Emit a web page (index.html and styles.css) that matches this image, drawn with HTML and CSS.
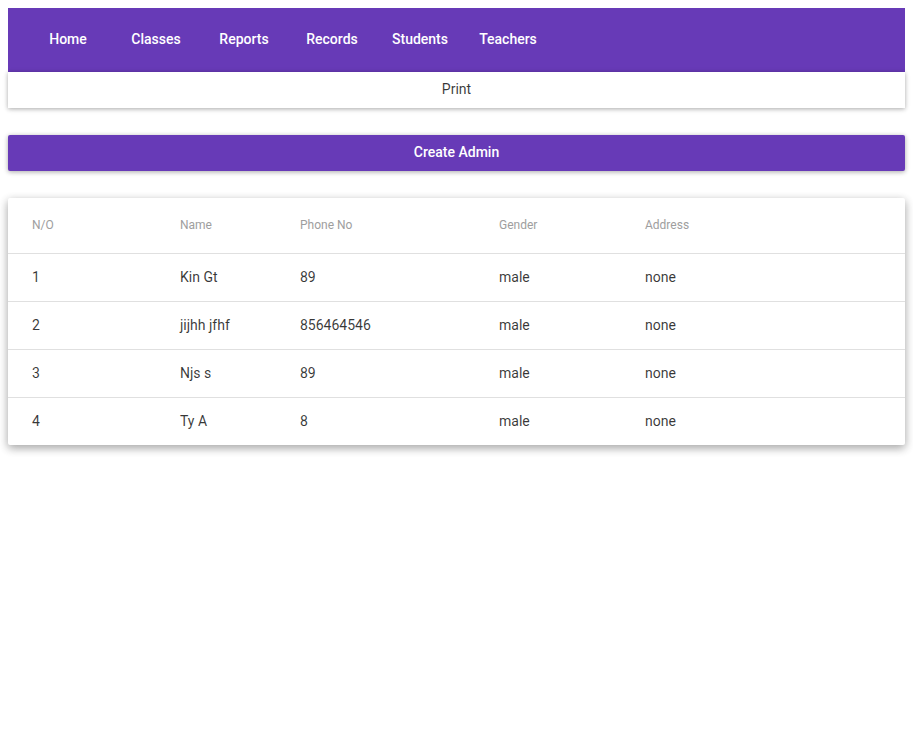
FILE: index.html
```html
<!DOCTYPE html>
<html>
<head>
<meta charset="utf-8">
<link rel="stylesheet" href="styles.css">
</head>
<body>
<header class="appbar">
  <nav class="tabs">
    <a class="tab">Home</a>
    <a class="tab">Classes</a>
    <a class="tab">Reports</a>
    <a class="tab">Records</a>
    <a class="tab">Students</a>
    <a class="tab">Teachers</a>
  </nav>
</header>
<div class="printbar">Print</div>
<button class="create">Create Admin</button>
<div class="card">
  <table class="table">
    <colgroup>
      <col class="c1"><col class="c2"><col class="c3"><col class="c4"><col class="c5">
    </colgroup>
    <thead>
      <tr><th>N/O</th><th>Name</th><th>Phone No</th><th>Gender</th><th>Address</th></tr>
    </thead>
    <tbody>
      <tr><td>1</td><td>Kin Gt</td><td>89</td><td>male</td><td>none</td></tr>
      <tr><td>2</td><td>jijhh jfhf</td><td>856464546</td><td>male</td><td>none</td></tr>
      <tr><td>3</td><td>Njs s</td><td>89</td><td>male</td><td>none</td></tr>
      <tr><td>4</td><td>Ty A</td><td>8</td><td>male</td><td>none</td></tr>
    </tbody>
  </table>
</div>
</body>
</html>
```
FILE: styles.css
```css
html {
  height: 100%;
  background: #fff;
}
body {
  margin: 0;
  padding: 8px;
  min-height: 100%;
  box-sizing: border-box;
  font-family: Roboto, "Liberation Sans", sans-serif;
  background: #fff;
}
.appbar {
  background: #673ab7;
  height: 64px;
  box-sizing: border-box;
  padding: 0 0 2px 16px;
  display: flex;
  align-items: center;
}
.tabs {
  display: flex;
}
.tab {
  width: 88px;
  text-align: center;
  color: #fff;
  font-size: 14px;
  font-weight: 500;
}
.printbar {
  height: 36px;
  line-height: 34px;
  text-align: center;
  font-size: 14px;
  color: rgba(0, 0, 0, 0.78);
  background: #fff;
  box-shadow: 0 1px 6px rgba(0, 0, 0, 0.12), 0 1px 4px rgba(0, 0, 0, 0.24);
}
.create {
  display: block;
  width: 100%;
  margin-top: 27px;
  height: 36px;
  padding: 0 0 2px;
  border: none;
  border-radius: 2px;
  background: #673ab7;
  color: #fff;
  font-family: inherit;
  font-size: 14px;
  font-weight: 500;
  box-shadow: 0 1px 6px rgba(0, 0, 0, 0.12), 0 1px 4px rgba(0, 0, 0, 0.24);
}
.card {
  margin-top: 27px;
  background: #fff;
  border-radius: 2px;
  box-shadow: 0 3px 10px rgba(0, 0, 0, 0.16), 0 3px 10px rgba(0, 0, 0, 0.23);
}
.table {
  width: 100%;
  border-collapse: collapse;
  table-layout: fixed;
}
.c1 { width: 148px; }
.c2 { width: 120px; }
.c3 { width: 199px; }
.c4 { width: 146px; }
.table th {
  height: 53px;
  padding: 0 24px 2px;
  text-align: left;
  font-size: 12px;
  font-weight: 400;
  color: #9e9e9e;
  border-bottom: 1px solid #e0e0e0;
}
.table td {
  height: 45px;
  padding: 0 24px 2px;
  font-size: 14px;
  color: rgba(0, 0, 0, 0.78);
  border-bottom: 1px solid #e0e0e0;
}
.table tbody tr:last-child td {
  border-bottom: none;
}
```
